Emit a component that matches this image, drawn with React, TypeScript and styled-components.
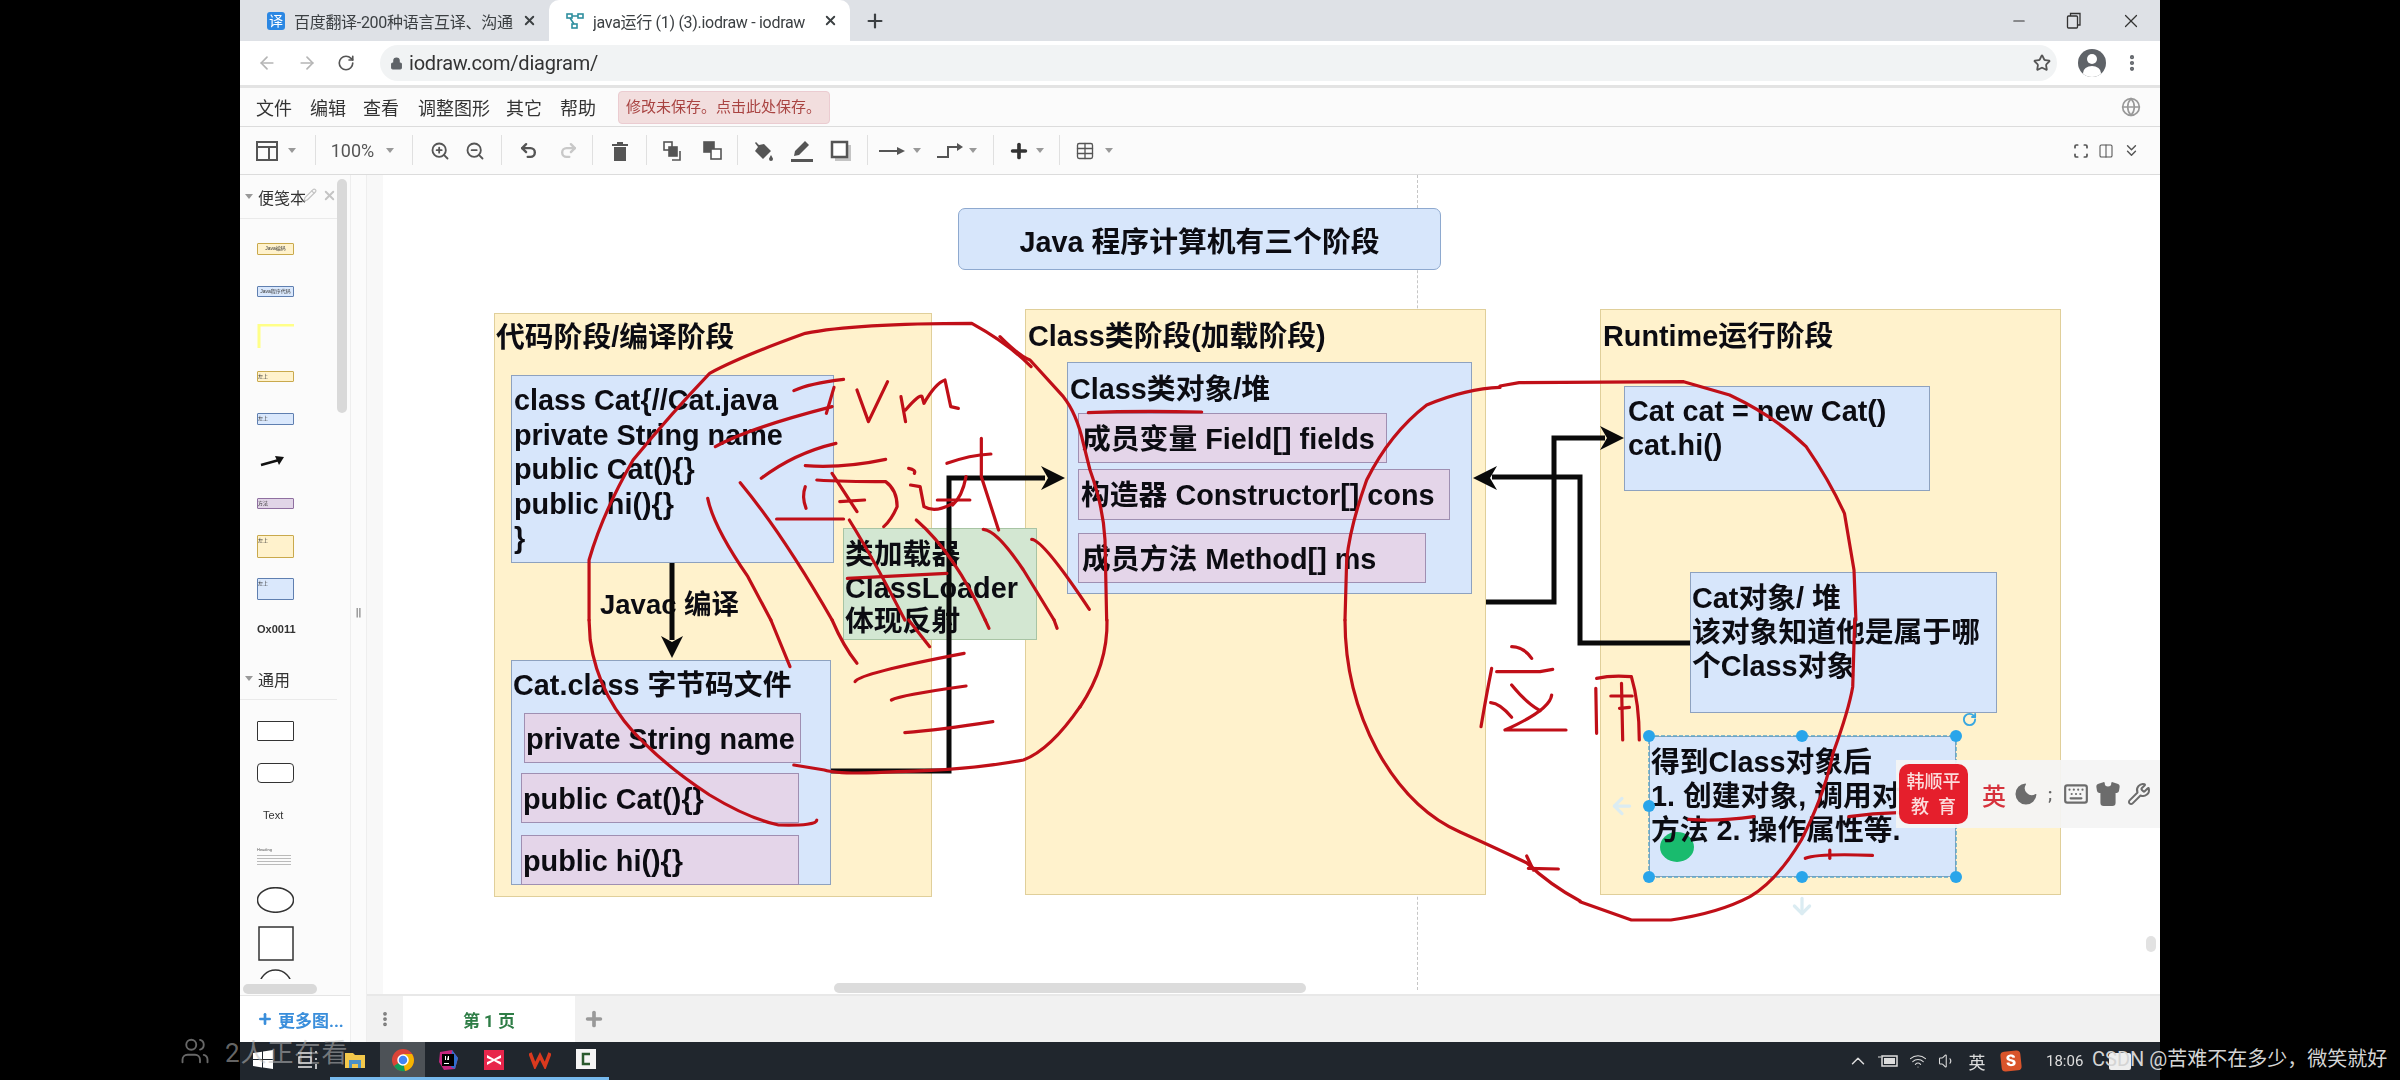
import React from 'react';
import styled, { createGlobalStyle } from 'styled-components';
import {
  ArrowLeft, ArrowRight, ArrowDown, RotateCw, Lock, Star, MoreVertical, Globe, ZoomIn, ZoomOut, Undo2, Redo2,
  Pencil, X, Plus, Minus, Table, ChevronsDown, Columns2, ChevronUp, Wifi, Volume1, Keyboard, Shirt, Wrench,
  Users, Scan, Moon,
} from 'lucide-react';

const SANS = `"Liberation Sans", "Noto Sans CJK SC", sans-serif`;
const UI = `"Roboto", "Noto Sans CJK SC", sans-serif`;

const Global = createGlobalStyle`
  html, body { margin: 0; padding: 0; background: #000; }
  body { font-family: ${UI}; }
`;

const Screen = styled.div`
  position: relative;
  width: 2400px;
  height: 1080px;
  background: #000;
  display: flex;
  justify-content: center;
  overflow: hidden;
`;
const Win = styled.div`
  width: 1920px;
  height: 1080px;
  background: #fff;
  display: flex;
  flex-direction: column;
  filter: blur(0.5px);
`;
const TabStrip = styled.div`
  height: 41px;
  background: #dee1e6;
  display: flex;
  align-items: flex-end;
  flex: none;
`;
const Tab = styled.div<{ $active?: boolean; $w: number; $ml: number }>`
  width: ${p => p.$w}px;
  margin-left: ${p => p.$ml}px;
  height: 41px;
  display: flex;
  align-items: center;
  gap: 9px;
  padding: 0 12px 0 17px;
  box-sizing: border-box;
  border-radius: 10px 10px 0 0;
  background: ${p => (p.$active ? '#fff' : 'transparent')};
  color: #3c4043;
  font-size: 16px;
`;
const TabTitle = styled.span`
  flex: 1;
  white-space: nowrap;
  overflow: hidden;
  letter-spacing: -0.3px;
`;
const Fav = styled.span`
  width: 18px;
  height: 18px;
  border-radius: 3px;
  background: #2b87e3;
  color: #fff;
  font-size: 14px;
  line-height: 18px;
  text-align: center;
  flex: none;
`;
const NewTab = styled.div`
  margin-left: 14px;
  height: 41px;
  display: flex;
  align-items: center;
  color: #3c4043;
`;
const WinControls = styled.div`
  margin-left: auto;
  height: 41px;
  display: flex;
  align-items: center;
  gap: 38px;
  padding-right: 18px;
  color: #333;
`;
const AddressBar = styled.div`
  height: 47px;
  flex: none;
  background: #fff;
  border-bottom: 3px solid #e3e3e3;
  box-sizing: border-box;
  display: flex;
  align-items: center;
  padding-left: 17px;
  color: #777;
`;
const NavSlot = styled.div<{ $w: number; $c?: string; $ml?: number }>`
  width: ${p => p.$w}px;
  margin-left: ${p => p.$ml || 0}px;
  display: flex;
  justify-content: center;
  align-items: center;
  color: ${p => p.$c || '#555'};
  flex: none;
`;
const Omnibox = styled.div`
  width: 1677px;
  margin-left: 25px;
  height: 36px;
  border-radius: 18px;
  background: #f1f3f4;
  display: flex;
  align-items: center;
  padding: 0 6px 0 10px;
  box-sizing: border-box;
  color: #333;
  font-size: 20px;
  flex: none;
`;
const Url = styled.span`
  margin-left: 6px;
  flex: 1;
  letter-spacing: -0.2px;
`;
const Avatar = styled.div`
  width: 28px;
  height: 28px;
  margin-left: 21px;
  flex: none;
  border-radius: 50%;
  background: #5f6368;
  position: relative;
  overflow: hidden;
  &::before { content: ''; position: absolute; left: 9px; top: 5px; width: 10px; height: 10px; border-radius: 50%; background: #fff; }
  &::after { content: ''; position: absolute; left: 5px; top: 17px; width: 18px; height: 14px; border-radius: 50%; background: #fff; }
`;
const MenuBar = styled.div`
  height: 39px;
  flex: none;
  display: flex;
  align-items: center;
  background: #fbfbfb;
  border-bottom: 1px solid #dcdcdc;
  box-sizing: border-box;
  padding: 0 19px 0 16px;
  font-size: 18px;
  color: #333;
`;
const MenuItem = styled.span<{ $w: number }>`
  width: ${p => p.$w}px;
  flex: none;
`;
const SaveNotice = styled.div`
  margin-left: 6px;
  width: 212px;
  height: 33px;
  box-sizing: border-box;
  background: #f2dede;
  border: 1px solid #ebccd1;
  border-radius: 4px;
  color: #a94442;
  font-size: 15px;
  line-height: 31px;
  padding-left: 7px;
  white-space: nowrap;
`;
const Toolbar = styled.div`
  height: 48px;
  flex: none;
  display: flex;
  align-items: center;
  background: #fbfbfb;
  border-bottom: 1px solid #dcdcdc;
  box-sizing: border-box;
  padding: 0 19px 0 14px;
  color: #666;
`;
const ToolSlot = styled.div<{ $w: number }>`
  width: ${p => p.$w}px;
  height: 32px;
  flex: none;
  display: flex;
  align-items: center;
  justify-content: center;
  font-size: 18px;
  color: #555;
`;
const ToolSep = styled.div<{ $w: number }>`
  width: ${p => p.$w}px;
  height: 32px;
  flex: none;
  display: flex;
  justify-content: center;
  &::after { content: ''; width: 1px; height: 30px; background: #e0e0e0; }
`;
const Caret = styled.span`
  width: 0;
  height: 0;
  border-left: 4px solid transparent;
  border-right: 4px solid transparent;
  border-top: 5px solid #999;
`;
const ToolRight = styled.div`
  margin-left: auto;
  display: flex;
  gap: 5px;
  align-items: center;
`;
const Body = styled.div`
  flex: 1;
  min-height: 0;
  display: flex;
`;
const Sidebar = styled.aside`
  position: relative;
  width: 110px;
  flex: none;
  display: flex;
  flex-direction: column;
  background: #fbfbfb;
  overflow: hidden;
`;
const Palette = styled.div`
  flex: 1;
  min-height: 0;
  overflow: hidden;
`;
const SectionHead = styled.div<{ $h: number; $mt?: number }>`
  height: ${p => p.$h}px;
  margin-top: ${p => p.$mt || 0}px;
  width: 97px;
  border-bottom: 1px solid #eaeaea;
  box-sizing: border-box;
  display: flex;
  align-items: center;
  gap: 5px;
  padding-left: 5px;
  color: #333;
  font-size: 16px;
  position: relative;
`;
const SectionCaret = styled.span`
  width: 0;
  height: 0;
  border-left: 4px solid transparent;
  border-right: 4px solid transparent;
  border-top: 5px solid #999;
`;
const SectionTools = styled.span`
  position: absolute;
  left: 63px;
  top: 13px;
  display: flex;
  gap: 5px;
  color: #c4c4c4;
`;
const Swatch = styled.div<{ $bg: string; $bd: string; $h: number; $mt: number; $r?: number; $center?: boolean }>`
  width: 37px;
  height: ${p => p.$h}px;
  margin: ${p => p.$mt}px 0 0 17px;
  background: ${p => p.$bg};
  border: 1.5px solid ${p => p.$bd};
  border-radius: ${p => p.$r || 1}px;
  box-sizing: border-box;
  font-family: ${SANS};
  font-size: 5px;
  color: #333;
  line-height: 8px;
  overflow: hidden;
  white-space: nowrap;
  text-align: ${p => (p.$center ? 'center' : 'left')};
`;
const PaletteIcon = styled.div<{ $mt: number }>`
  margin: ${p => p.$mt}px 0 0 17px;
  width: 37px;
  line-height: 0;
`;
const PaletteText = styled.div<{ $mt: number; $size: number; $weight?: number }>`
  margin: ${p => p.$mt}px 0 0 17px;
  width: 50px;
  font-family: ${SANS};
  font-size: ${p => p.$size}px;
  font-weight: ${p => p.$weight || 400};
  line-height: 1.1;
  color: #333;
`;
const Heading = styled.div`
  margin: 27px 0 0 17px;
  width: 34px;
  font-family: ${SANS};
  font-size: 4px;
  line-height: 4px;
  color: #555;
`;
const HeadingLines = styled.div`
  margin-top: 3px;
  height: 10px;
  background: repeating-linear-gradient(#bbb 0 1px, transparent 1px 3px);
`;
const SideScrollV = styled.div`
  position: absolute;
  left: 97px;
  top: 4px;
  width: 10px;
  height: 234px;
  border-radius: 5px;
  background: #d9d9d9;
`;
const SideScrollH = styled.div`
  position: absolute;
  left: 3px;
  bottom: 48px;
  width: 74px;
  height: 10px;
  border-radius: 5px;
  background: #d9d9d9;
`;
const MoreShapes = styled.div`
  height: 46px;
  flex: none;
  border-top: 1px solid #e5e5e5;
  background: #fff;
  color: #3a8edb;
  font-weight: 700;
  font-size: 17px;
  display: flex;
  align-items: center;
  gap: 5px;
  padding-left: 17px;
  white-space: nowrap;
`;
const Gutter = styled.div`
  width: 17px;
  flex: none;
  background: #fbfbfb;
  border-left: 1px solid #eee;
  border-right: 1px solid #eee;
  box-sizing: border-box;
  padding-top: 431px;
  color: #666;
  font-size: 11px;
  font-weight: 700;
  text-align: center;
`;
const MainCol = styled.div`
  flex: 1;
  min-width: 0;
  display: flex;
  flex-direction: column;
`;
const Canvas = styled.div`
  flex: 1;
  min-height: 0;
  position: relative;
  background: #fff;
  border-left: 16px solid #f8f8f8;
  box-sizing: border-box;
`;
const PageBar = styled.div`
  height: 48px;
  flex: none;
  background: #f1f1f1;
  border-top: 2px solid #e8e8e8;
  box-sizing: border-box;
  display: flex;
  align-items: stretch;
  color: #8a8a8a;
`;
const PageDots = styled.div`
  width: 36px;
  display: flex;
  align-items: center;
  justify-content: center;
  color: #777;
`;
const PageTab = styled.div`
  width: 172px;
  background: #fff;
  color: #2e7d46;
  font-weight: 700;
  font-size: 17px;
  display: flex;
  align-items: center;
  justify-content: center;
`;
const PagePlus = styled.div`
  width: 38px;
  display: flex;
  align-items: center;
  justify-content: center;
  color: #999;
`;
const Taskbar = styled.div`
  height: 38px;
  flex: none;
  background: #20262d;
  display: flex;
  align-items: stretch;
  color: #eee;
`;
const TaskSlot = styled.div<{ $w: number; $on?: boolean; $bar?: boolean }>`
  width: ${p => p.$w}px;
  flex: none;
  display: flex;
  align-items: center;
  justify-content: center;
  background: ${p => (p.$on ? '#4d5257' : 'transparent')};
  box-shadow: ${p => (p.$bar ? 'inset 0 -3px 0 #76b9ed' : 'none')};
  padding-bottom: 2px;
  box-sizing: border-box;
`;
const Tray = styled.div`
  margin-left: auto;
  display: flex;
  align-items: center;
  padding-right: 29px;
  color: #ddd;
  font-size: 17px;
`;
const TraySlot = styled.span<{ $w: number }>`
  width: ${p => p.$w}px;
  display: flex;
  justify-content: center;
  align-items: center;
`;
const Clock = styled.span`
  margin: 0 13px 0 17px;
  font-size: 15px;
  width: 50px;
`;
const Notif = styled.span`
  width: 22px;
  height: 17px;
  background: #eee;
  border-radius: 2px;
`;
const SogouBadge = styled.span`
  width: 20px;
  height: 20px;
  background: #d9542b;
  border-radius: 4px;
  color: #fff;
  font-weight: 900;
  font-size: 16px;
  line-height: 20px;
  text-align: center;
  transform: rotate(-6deg);
`;

/* ---- diagram: nodes on a free canvas, coordinates are page coordinates ---- */
const Diagram = styled.div`
  position: absolute;
  left: -383px;
  top: -175px;
  width: 2400px;
  height: 1080px;
  font-family: ${SANS};
  font-weight: 700;
  color: #0c0c12;
`;
const GuideLine = styled.div`
  position: absolute;
  left: 1417px;
  top: 175px;
  height: 815px;
  border-left: 1px dashed #c6c6c6;
`;
const CanvasScrollH = styled.div`
  position: absolute;
  left: 834px;
  top: 983px;
  width: 472px;
  height: 10px;
  border-radius: 5px;
  background: #dcdcdc;
`;
const CanvasScrollV = styled.div`
  position: absolute;
  left: 2146px;
  top: 936px;
  width: 10px;
  height: 16px;
  border-radius: 5px;
  background: #e2e2e2;
`;
const Node = styled.div<{ $x: number; $y: number; $w: number; $h: number; $kind: 'stage' | 'blue' | 'purple' | 'green' }>`
  position: absolute;
  left: ${p => p.$x}px;
  top: ${p => p.$y}px;
  width: ${p => p.$w}px;
  height: ${p => p.$h}px;
  box-sizing: border-box;
  border: 1.5px solid ${p => ({ stage: '#e0cf9a', blue: '#8ea2bf', purple: '#9f8fb2', green: '#a8c4a4' }[p.$kind])};
  background: ${p => ({ stage: '#fff2cc', blue: '#d7e6fb', purple: '#e4d5e9', green: '#d3e7d2' }[p.$kind])};
`;
const TitleBox = styled.div`
  position: absolute;
  left: 958px;
  top: 208px;
  width: 483px;
  height: 62px;
  box-sizing: border-box;
  border: 1.5px solid #8ea9cf;
  border-radius: 7px;
  background: #d7e6fb;
  display: flex;
  align-items: center;
  justify-content: center;
  font-size: 28.8px;
`;
const NodeText = styled.div<{ $x: number; $y: number; $size?: number; $lh?: number }>`
  position: absolute;
  left: ${p => p.$x}px;
  top: ${p => p.$y}px;
  font-size: ${p => p.$size || 28.8}px;
  line-height: ${p => p.$lh || 34}px;
  white-space: pre;
`;
const Overlay = styled.svg`
  position: absolute;
  left: 0;
  top: 0;
  width: 2400px;
  height: 1080px;
  pointer-events: none;
`;
const Cursor = styled.div`
  position: absolute;
  left: 1660px;
  top: 832px;
  width: 34px;
  height: 30px;
  border-radius: 50%;
  background: #19bb6e;
`;
const Handle = styled.div<{ $x: number; $y: number }>`
  position: absolute;
  left: ${p => p.$x - 6}px;
  top: ${p => p.$y - 6}px;
  width: 12px;
  height: 12px;
  border-radius: 50%;
  background: #29a5ea;
`;
const RotateHandle = styled.div`
  position: absolute;
  left: 1962px;
  top: 712px;
  color: #39a7e0;
  line-height: 0;
`;
const GhostArrow = styled.div<{ $x: number; $y: number }>`
  position: absolute;
  left: ${p => p.$x}px;
  top: ${p => p.$y}px;
  color: #dbecf2;
  line-height: 0;
`;
const ImeBar = styled.div`
  position: absolute;
  left: 1896px;
  top: 760px;
  width: 264px;
  height: 68px;
  background: rgba(244, 244, 244, 0.93);
  display: flex;
  align-items: center;
  font-family: ${UI};
  overflow: hidden;
`;
const ImeLogo = styled.div`
  width: 69px;
  height: 60px;
  margin-left: 3px;
  flex: none;
  border-radius: 10px;
  background: #e51f2c;
  color: #fbdcdc;
  font-size: 18px;
  font-weight: 500;
  line-height: 25px;
  text-align: center;
  padding-top: 5px;
  box-sizing: border-box;
  white-space: pre;
`;
const ImeLang = styled.span`
  margin-left: 14px;
  color: #d6323c;
  font-size: 24px;
  font-weight: 500;
  width: 30px;
`;
const ImeIcons = styled.div`
  display: flex;
  align-items: center;
  gap: 6px;
  color: #6c6c6c;
`;
const ImeSemi = styled.span`
  color: #666;
  font-size: 16px;
  margin: 0 5px 0 2px;
`;

/* ---- overlays on the video ---- */
const Watchers = styled.div`
  position: absolute;
  left: 180px;
  top: 1032px;
  display: flex;
  align-items: center;
  gap: 15px;
  color: rgba(190, 190, 190, 0.55);
  font-size: 26px;
  font-family: ${UI};
  letter-spacing: 1px;
  white-space: nowrap;
`;
const Watermark = styled.div`
  position: absolute;
  left: 2092px;
  top: 1047px;
  color: #d4d4d4;
  font-size: 20px;
  line-height: 24px;
  font-family: ${UI};
  white-space: nowrap;
`;

const Ink: React.FC<{ x: number; y: number; sx: number; sy?: number; d: string[] }> = ({ x, y, sx, sy = 3, d }) => (
  <g transform={`translate(${x} ${y}) scale(${1 / sx} ${1 / sy})`}>
    {d.map(p => (
      <path key={p} d={p} vectorEffect="non-scaling-stroke" />
    ))}
  </g>
);

const Fill: React.FC<{ children: React.ReactNode; w?: number; h?: number }> = ({ children, w = 24, h = 24 }) => (
  <svg width={w} height={h} viewBox={`0 0 ${w} ${h}`} fill="currentColor">
    {children}
  </svg>
);

const MENU: [string, number][] = [['文件', 54], ['编辑', 53], ['查看', 55], ['调整图形', 88], ['其它', 54], ['帮助', 52]];
const HANDLES: [number, number][] = [
  [1649, 736], [1802, 736], [1956, 736], [1649, 806], [1649, 877], [1802, 877], [1956, 877],
];

export default function App() {
  return (
    <Screen>
      <Global />
      <Win>
        <TabStrip>
          <Tab $w={299} $ml={10}>
            <Fav>译</Fav>
            <TabTitle>百度翻译-200种语言互译、沟通:</TabTitle>
            <X size={15} strokeWidth={3} />
          </Tab>
          <Tab $active $w={301} $ml={0}>
            <svg width="18" height="18" viewBox="0 0 18 18" fill="none" stroke="#2f8f9f" strokeWidth="1.6">
              <rect x="1" y="2" width="5" height="4" />
              <rect x="12" y="2" width="5" height="4" />
              <rect x="6" y="12" width="5" height="4" />
              <path d="M6 4h6M4 6l4 6" />
            </svg>
            <TabTitle>java运行 (1) (3).iodraw - iodraw</TabTitle>
            <X size={15} strokeWidth={3} />
          </Tab>
          <NewTab><Plus size={22} strokeWidth={2.4} /></NewTab>
          <WinControls>
            <Minus size={18} strokeWidth={1.4} />
            <svg width="16" height="18" viewBox="0 0 16 18" fill="none" stroke="#333" strokeWidth="1.3">
              <rect x="1.5" y="4" width="10" height="12" rx="1" />
              <path d="M4.5 4V1.5H14V13h-2.500" />
            </svg>
            <X size={22} strokeWidth={1.3} />
          </WinControls>
        </TabStrip>

        <AddressBar>
          <NavSlot $w={20} $c="#b5b5b5"><ArrowLeft size={20} /></NavSlot>
          <NavSlot $w={60} $c="#b5b5b5"><ArrowRight size={20} /></NavSlot>
          <NavSlot $w={18}><RotateCw size={20} strokeWidth={2.2} /></NavSlot>
          <Omnibox>
            <Lock size={13} fill="#5f6368" color="#5f6368" />
            <Url>iodraw.com/diagram/</Url>
            <Star size={18} strokeWidth={2.4} color="#555" />
          </Omnibox>
          <Avatar />
          <NavSlot $w={44} $c="#5f6368" $ml={4}><MoreVertical size={20} strokeWidth={3} /></NavSlot>
        </AddressBar>

        <MenuBar>
          {MENU.map(([t, w]) => <MenuItem key={t} $w={w}>{t}</MenuItem>)}
          <SaveNotice>修改未保存。点击此处保存。</SaveNotice>
          <ToolRight><Globe size={20} color="#999" /></ToolRight>
        </MenuBar>

        <Toolbar>
          <ToolSlot $w={25}>
            <svg width="22" height="22" viewBox="0 0 22 22" fill="none" stroke="#555" strokeWidth="2">
              <rect x="1" y="2" width="20" height="18" />
              <path d="M1 7h20M13 7v13" />
            </svg>
          </ToolSlot>
          <ToolSlot $w={26}><Caret /></ToolSlot>
          <ToolSep $w={20} />
          <ToolSlot $w={55}>100%</ToolSlot>
          <ToolSlot $w={20}><Caret /></ToolSlot>
          <ToolSep $w={24} />
          <ToolSlot $w={32}><ZoomIn size={20} strokeWidth={2.2} /></ToolSlot>
          <ToolSlot $w={38}><ZoomOut size={20} strokeWidth={2.2} /></ToolSlot>
          <ToolSep $w={14} />
          <ToolSlot $w={40}><Undo2 size={19} strokeWidth={3} /></ToolSlot>
          <ToolSlot $w={40}><Redo2 size={19} strokeWidth={3} color="#c8c8c8" /></ToolSlot>
          <ToolSep $w={8} />
          <ToolSlot $w={48}>
            <Fill w={18} h={20}><path d="M1 3h16v2H1zM6 1h6v2H6zM3 6h12v14H3z" /></Fill>
          </ToolSlot>
          <ToolSep $w={4} />
          <ToolSlot $w={50}>
            <svg width="20" height="20" viewBox="0 0 20 20" fill="none" stroke="#555" strokeWidth="1.6">
              <rect x="1" y="1" width="8" height="8" />
              <rect x="6" y="6" width="8" height="9" fill="#555" />
              <path d="M17 10v9h-8" />
            </svg>
          </ToolSlot>
          <ToolSlot $w={30}>
            <svg width="20" height="20" viewBox="0 0 20 20" fill="none" stroke="#555" strokeWidth="1.6">
              <rect x="1" y="1" width="10" height="10" fill="#555" />
              <rect x="8" y="8" width="10" height="10" fill="#fff" />
            </svg>
          </ToolSlot>
          <ToolSep $w={18} />
          <ToolSlot $w={36}>
            <Fill w={22} h={22}><path d="M3 2l3 3 5-1 7 7-8 8-8-8 3-4-3-4zM18 15c1 2 2 3 2 4a2 2 0 0 1-4 0c0-1 1-2 2-4z" /></Fill>
          </ToolSlot>
          <ToolSlot $w={40}>
            <Fill w={24} h={24}><path d="M15 2l4 4-10 10-5 1 1-5zM1 20h22v3H1z" /></Fill>
          </ToolSlot>
          <ToolSlot $w={38}>
            <svg width="22" height="22" viewBox="0 0 22 22" fill="none">
              <rect x="5" y="5" width="16" height="16" fill="#c4c4c4" />
              <rect x="2" y="2" width="15" height="15" fill="#fff" stroke="#555" strokeWidth="2.500" />
            </svg>
          </ToolSlot>
          <ToolSep $w={14} />
          <ToolSlot $w={36}>
            <svg width="26" height="10" viewBox="0 0 26 10" fill="#555"><path d="M0 4h19v2H0zM18 1l8 4-8 4z" /></svg>
          </ToolSlot>
          <ToolSlot $w={14}><Caret /></ToolSlot>
          <ToolSlot $w={12} />
          <ToolSlot $w={28}>
            <svg width="26" height="16" viewBox="0 0 26 16" fill="none" stroke="#555" strokeWidth="2"><path d="M0 14h11V4h10" /><path d="M20 0l6 4-6 4z" fill="#555" stroke="none" /></svg>
          </ToolSlot>
          <ToolSlot $w={18}><Caret /></ToolSlot>
          <ToolSep $w={22} />
          <ToolSlot $w={30}><Plus size={22} strokeWidth={4} color="#333" /></ToolSlot>
          <ToolSlot $w={12}><Caret /></ToolSlot>
          <ToolSep $w={26} />
          <ToolSlot $w={26}><Table size={20} strokeWidth={1.6} /></ToolSlot>
          <ToolSlot $w={22}><Caret /></ToolSlot>
          <ToolRight>
            <ToolSlot $w={20}><Scan size={16} strokeWidth={2.6} /></ToolSlot>
            <ToolSlot $w={20}><Columns2 size={16} strokeWidth={1.6} /></ToolSlot>
            <ToolSlot $w={20}><ChevronsDown size={19} strokeWidth={1.8} /></ToolSlot>
          </ToolRight>
        </Toolbar>

        <Body>
          <Sidebar>
            <Palette>
              <SectionHead $h={44}>
                <SectionCaret />便笺本
                <SectionTools><Pencil size={14} /><X size={15} strokeWidth={3} /></SectionTools>
              </SectionHead>
              <Swatch $bg="#fff2cc" $bd="#c9a94c" $h={12} $mt={24} $center>Java编码</Swatch>
              <Swatch $bg="#dae8fc" $bd="#5f7fb0" $h={11} $mt={31} $center>Java程序代码</Swatch>
              <PaletteIcon $mt={27}>
                <svg width="37" height="24" viewBox="0 0 37 24" fill="none" stroke="#ffff88" strokeWidth="3"><path d="M37 1H2v23" /></svg>
              </PaletteIcon>
              <Swatch $bg="#fff2cc" $bd="#c9a94c" $h={11} $mt={23}>左上</Swatch>
              <Swatch $bg="#dae8fc" $bd="#5f7fb0" $h={12} $mt={31}>左上</Swatch>
              <PaletteIcon $mt={30}>
                <svg width="30" height="12" viewBox="0 0 30 12" fill="#111" stroke="#111"><path d="M4 10L22 5" strokeWidth="2.500" /><path d="M18 1l9 1-5 8z" stroke="none" /></svg>
              </PaletteIcon>
              <Swatch $bg="#e1d5e7" $bd="#8f6fa0" $h={11} $mt={31}>方法</Swatch>
              <Swatch $bg="#fff2cc" $bd="#c9a94c" $h={23} $mt={26}>左上</Swatch>
              <Swatch $bg="#dae8fc" $bd="#5f7fb0" $h={22} $mt={20}>左上</Swatch>
              <PaletteText $mt={23} $size={11} $weight={700}>Ox0011</PaletteText>
              <SectionHead $h={42} $mt={23}>
                <SectionCaret />通用
              </SectionHead>
              <Swatch $bg="#fff" $bd="#333" $h={20} $mt={21} />
              <Swatch $bg="#fff" $bd="#333" $h={20} $mt={22} $r={4} />
              <PaletteText $mt={26} $size={11}>&nbsp;&nbsp;Text</PaletteText>
              <Heading>
                Heading
                <HeadingLines />
              </Heading>
              <PaletteIcon $mt={22}>
                <svg width="37" height="26" viewBox="0 0 37 26" fill="#fff" stroke="#333" strokeWidth="1.500"><ellipse cx="18.500" cy="13" rx="18" ry="12.300" /></svg>
              </PaletteIcon>
              <PaletteIcon $mt={13}>
                <svg width="37" height="35" viewBox="0 0 37 35" fill="#fff" stroke="#333" strokeWidth="1.500"><rect x="2" y="1" width="34" height="33" /></svg>
              </PaletteIcon>
              <PaletteIcon $mt={8}>
                <svg width="37" height="10" viewBox="0 0 37 10" fill="#fff" stroke="#333" strokeWidth="1.500"><circle cx="18.500" cy="17" r="16" /></svg>
              </PaletteIcon>
            </Palette>
            <SideScrollV />
            <SideScrollH />
            <MoreShapes><Plus size={16} strokeWidth={4} />更多图...</MoreShapes>
          </Sidebar>
          <Gutter>||</Gutter>
          <MainCol>
            <Canvas>
              <Diagram>
                <GuideLine />
                <CanvasScrollH />
                <CanvasScrollV />
                <TitleBox>Java 程序计算机有三个阶段</TitleBox>

                <Node $kind="stage" $x={494} $y={313} $w={438} $h={584} />
                <NodeText $x={496} $y={320}>代码阶段/编译阶段</NodeText>
                <Node $kind="blue" $x={511} $y={375} $w={323} $h={188} />
                <NodeText $x={514} $y={383} $lh={34.500}>{'class Cat{//Cat.java\nprivate String name\npublic Cat(){}\npublic hi(){}\n}'}</NodeText>
                <NodeText $x={600} $y={588} $size={27.500}>Javac 编译</NodeText>
                <Node $kind="blue" $x={511} $y={660} $w={320} $h={225} />
                <NodeText $x={513} $y={668}>Cat.class 字节码文件</NodeText>
                <Node $kind="purple" $x={524} $y={713} $w={277} $h={50} />
                <NodeText $x={526} $y={722}>private String name</NodeText>
                <Node $kind="purple" $x={521} $y={773} $w={278} $h={50} />
                <NodeText $x={523} $y={782}>public Cat(){'{}'}</NodeText>
                <Node $kind="purple" $x={521} $y={835} $w={278} $h={50} />
                <NodeText $x={523} $y={844}>public hi(){'{}'}</NodeText>

                <Node $kind="stage" $x={1025} $y={309} $w={461} $h={586} />
                <NodeText $x={1028} $y={319}>Class类阶段(加载阶段)</NodeText>
                <Node $kind="blue" $x={1067} $y={362} $w={405} $h={232} />
                <NodeText $x={1070} $y={372}>Class类对象/堆</NodeText>
                <Node $kind="purple" $x={1078} $y={413} $w={309} $h={50} />
                <NodeText $x={1082} $y={422}>成员变量 Field[] fields</NodeText>
                <Node $kind="purple" $x={1078} $y={469} $w={372} $h={51} />
                <NodeText $x={1081} $y={478}>构造器 Constructor[] cons</NodeText>
                <Node $kind="purple" $x={1078} $y={533} $w={348} $h={50} />
                <NodeText $x={1082} $y={542}>成员方法 Method[] ms</NodeText>

                <Node $kind="green" $x={843} $y={528} $w={194} $h={112} />
                <NodeText $x={845} $y={538} $lh={33.500}>{'类加载器\nClassLoader\n体现反射'}</NodeText>

                <Node $kind="stage" $x={1600} $y={309} $w={461} $h={586} />
                <NodeText $x={1603} $y={319}>Runtime运行阶段</NodeText>
                <Node $kind="blue" $x={1624} $y={386} $w={306} $h={105} />
                <NodeText $x={1628} $y={394}>{'Cat cat = new Cat()\ncat.hi()'}</NodeText>
                <Node $kind="blue" $x={1690} $y={572} $w={307} $h={141} />
                <NodeText $x={1692} $y={581}>{'Cat对象/ 堆\n该对象知道他是属于哪\n个Class对象'}</NodeText>

                <Node $kind="blue" $x={1649} $y={736} $w={307} $h={141} />
                <Cursor />
                <NodeText $x={1651} $y={745}>{'得到Class对象后\n1. 创建对象, 调用对\n方法 2. 操作属性等.'}</NodeText>

                <Overlay viewBox="0 0 2400 1080">
                  <g fill="none" stroke="#0a0a0a" strokeWidth="5">
                    <path d="M672 563V640" />
                    <path d="M831 771H949V478H1045" />
                    <path d="M1492 477H1580V643H1690" />
                    <path d="M1486 602H1554V438H1605" />
                  </g>
                  <g fill="#0a0a0a">
                    <path d="M672 658l-11-22 11 6 11-6z" />
                    <path d="M1065 478l-24-12 7 12-7 12z" />
                    <path d="M1473 478l24-12-7 12 7 12z" />
                    <path d="M1624 438l-24-12 7 12-7 12z" />
                  </g>
                  <g fill="none" stroke="#5fa8c8" strokeWidth="1.500" strokeDasharray="4 2">
                    <rect x="1649" y="736" width="307" height="141" />
                  </g>
                  <g fill="none" stroke="#c00f18" strokeWidth="3.200" strokeLinecap="round" strokeLinejoin="round">
                    <Ink x={480} y={620} sx={2.613} d={[
                      'M880 600 Q880 618 780 615 Q700 595 600 525 Q500 450 430 370 Q310 240 288 60 L285 0',
                      'M1568 260 Q1490 390 1420 420 Q1280 450 1090 455 Q940 465 900 450 L820 435',
                      'M760 0 L810 140', 'M920 0 Q950 80 985 130', 'M1120 0 L1175 80', 'M1320 0 L1330 25', 'M1500 0 L1508 25',
                      'M980 185 Q990 160 1265 100', 'M1075 240 Q1100 225 1270 198', 'M1110 338 Q1200 330 1340 305',
                    ]} />
                    <Ink x={480} y={300} sx={2.613} d={[
                      'M285 960 L285 780 Q320 640 400 480 Q500 340 600 220 Q680 170 850 100 Q980 70 1285 70 Q1380 130 1440 200',
                      'M820 272 Q860 250 950 238', 'M925 262 L905 340', 'M615 440 Q700 385 920 320',
                      'M985 270 L1015 365 L1065 245',
                      'M1100 290 L1112 365 M1112 330 Q1150 280 1155 290 L1160 310 Q1190 250 1215 240 L1230 320 L1250 325',
                      'M735 535 Q820 460 930 430', 'M850 497 Q950 505 1060 478',
                      'M850 560 Q840 590 852 625', 'M880 540 Q950 545 1060 545 Q1090 570 1090 620 Q1075 660 1055 680',
                      'M920 520 L985 635', 'M940 605 L1005 600', 'M775 657 L950 657',
                      'M1120 505 Q1140 510 1135 520', 'M1125 555 L1150 560 L1160 620 Q1190 640 1235 610',
                      'M1220 490 Q1280 465 1335 462', 'M1310 415 L1310 530 L1355 690', 'M1195 600 L1280 600', 'M1270 530 Q1260 590 1235 615',
                      'M595 595 Q610 680 700 830 L760 960', 'M680 548 Q790 700 920 960',
                      'M965 660 Q1030 780 1110 960', 'M1140 660 Q1240 760 1320 960', 'M1315 688 Q1350 690 1420 810 L1500 960',
                      'M960 835 L1220 820',
                    ]} />
                    <Ink x={1000} y={300} sx={3} d={[
                      'M265 338 Q400 332 605 336',
                      'M95 718 Q130 720 268 928',
                      'M0 110 Q60 170 90 180 L190 290 Q230 340 250 430 L270 510 Q310 620 315 720 L320 960',
                      'M1500 262 Q1400 265 1280 315 Q1170 400 1100 540 Q1050 680 1040 780 L1035 960',
                    ]} />
                    <path d="M1107 620 Q1108 665 1080 707" />
                    <path d="M1345 620 Q1345 690 1377 750 Q1410 810 1460 832 Q1500 850 1527 863 Q1550 885 1580 901" />
                    <Ink x={1500} y={300} sx={2.613} d={[
                      'M0 258 L50 248 L480 245 L600 285 Q720 350 800 440 Q860 540 900 640 L925 810 L930 960',
                    ]} />
                    <Ink x={1580} y={620} sx={2.53} d={[
                      'M0 845 L130 900 L230 900 Q350 880 430 830 Q500 780 560 660 Q620 520 640 400 Q680 270 690 200 L695 0',
                      'M40 205 L42 340', 'M42 175 Q80 165 130 170 Q150 250 150 360', 'M78 228 L132 228', 'M105 190 L108 360', 'M100 265 L125 262',
                      'M275 598 Q350 605 440 590', 'M680 590 Q740 580 805 578', 'M570 715 Q600 700 740 706', 'M632 690 L632 715',
                    ]} />
                    <Ink x={1460} y={640} sx={3} d={[
                      'M155 20 Q190 20 215 55', 'M110 95 L240 95 L278 88', 'M95 85 Q80 160 63 260',
                      'M155 135 Q200 190 240 212', 'M92 188 Q120 190 155 232',
                      'M275 165 Q270 210 135 270 L318 270',
                      'M200 648 L220 690 M205 685 L295 687',
                    ]} />
                  </g>
                </Overlay>

                <GhostArrow $x={1609} $y={793}><ArrowLeft size={26} strokeWidth={3} /></GhostArrow>
                <GhostArrow $x={1789} $y={893}><ArrowDown size={26} strokeWidth={3} /></GhostArrow>
                {HANDLES.map(([x, y]) => <Handle key={`${x}-${y}`} $x={x} $y={y} />)}
                <RotateHandle><RotateCw size={15} strokeWidth={3} /></RotateHandle>

                <ImeBar>
                  <ImeLogo>{'韩顺平\n教  育'}</ImeLogo>
                  <ImeLang>英</ImeLang>
                  <ImeIcons>
                    <Moon size={28} fill="#6c6c6c" strokeWidth={0} />
                    <ImeSemi>;</ImeSemi>
                    <Keyboard size={26} />
                    <Shirt size={26} fill="#6c6c6c" />
                    <Wrench size={24} />
                  </ImeIcons>
                </ImeBar>
              </Diagram>
            </Canvas>
            <PageBar>
              <PageDots><MoreVertical size={18} strokeWidth={3} /></PageDots>
              <PageTab>第 1 页</PageTab>
              <PagePlus><Plus size={22} strokeWidth={4} /></PagePlus>
            </PageBar>
          </MainCol>
        </Body>

        <Taskbar>
          <TaskSlot $w={46}>
            <svg width="22" height="22" viewBox="0 0 22 22" fill="#fff"><path d="M1 4l9-1.300V10H1zM11 2.500L21 1v9H11zM1 11h9v7.500L1 17zM11 11h10v9l-10-1.500z" /></svg>
          </TaskSlot>
          <TaskSlot $w={44}>
            <svg width="22" height="20" viewBox="0 0 22 20" fill="none" stroke="#eee" strokeWidth="1.500"><path d="M1 3h14M1 17h14M2 7h12v6H2zM19 1v2M19 8v2M19 14v5" /></svg>
          </TaskSlot>
          <TaskSlot $w={50} $bar>
            <svg width="22" height="20" viewBox="0 0 22 20"><path d="M1 3h8l2 2h10v13H1z" fill="#f3c84b" /><path d="M5 10h12v8h-3v-4H8v4H5z" fill="#4a90c8" /></svg>
          </TaskSlot>
          <TaskSlot $w={45} $on $bar>
            <svg width="24" height="24" viewBox="0 0 24 24">
              <circle cx="12" cy="12" r="11" fill="#db4437" />
              <path d="M12 12L3 18a11 11 0 0 0 11 5z" fill="#0f9d58" />
              <path d="M12 12l2 11a11 11 0 0 0 7-17h-9z" fill="#f4b400" />
              <circle cx="12" cy="12" r="5" fill="#4285f4" stroke="#fff" strokeWidth="1.500" />
            </svg>
          </TaskSlot>
          <TaskSlot $w={46} $bar>
            <svg width="22" height="22" viewBox="0 0 22 22"><path d="M3 3l12-2 6 8-3 11-11 1-5-8z" fill="#c5267f" /><path d="M15 1l6 8-3 11-4-2z" fill="#2f6fd0" /><rect x="5" y="5" width="12" height="12" fill="#000" /><path d="M7 14h5v1H7zM8 7h1v4H8zM11 7h1v4h-2" fill="#fff" /></svg>
          </TaskSlot>
          <TaskSlot $w={46} $bar>
            <svg width="20" height="20" viewBox="0 0 20 20"><rect width="20" height="20" fill="#e8264c" /><path d="M3 5l7 4 7-4v3l-5 2 5 2v3l-7-4-7 4v-3l5-2-5-2z" fill="#fff" /></svg>
          </TaskSlot>
          <TaskSlot $w={46} $bar>
            <svg width="22" height="18" viewBox="0 0 22 18" fill="none" stroke="#d9391e" strokeWidth="3.500"><path d="M1 2l5 13 5-10 5 10 5-13" /></svg>
          </TaskSlot>
          <TaskSlot $w={46} $bar>
            <svg width="20" height="22" viewBox="0 0 20 22"><rect width="20" height="20" fill="#f5f5f5" /><path d="M14 5H7v10h7" fill="none" stroke="#2b5a2e" strokeWidth="2.500" /></svg>
          </TaskSlot>
          <Tray>
            <TraySlot $w={30}><ChevronUp size={22} strokeWidth={1.6} /></TraySlot>
            <TraySlot $w={30}>
              <svg width="20" height="14" viewBox="0 0 20 14" fill="#ddd" stroke="#ddd"><rect x="4" y="2" width="15" height="10" fill="none" strokeWidth="1.500" /><rect x="6" y="4" width="11" height="6" strokeWidth="0" /><path d="M0 3h3" /></svg>
            </TraySlot>
            <TraySlot $w={30}><Wifi size={18} strokeWidth={1.4} /></TraySlot>
            <TraySlot $w={28}><Volume1 size={18} strokeWidth={1.4} /></TraySlot>
            <TraySlot $w={32}>英</TraySlot>
            <TraySlot $w={36}><SogouBadge>S</SogouBadge></TraySlot>
            <Clock>18:06</Clock>
            <Notif />
          </Tray>
        </Taskbar>
      </Win>
      <Watchers><Users size={30} strokeWidth={1.5} />2人正在看</Watchers>
      <Watermark>CSDN @苦难不在多少，微笑就好</Watermark>
    </Screen>
  );
}
